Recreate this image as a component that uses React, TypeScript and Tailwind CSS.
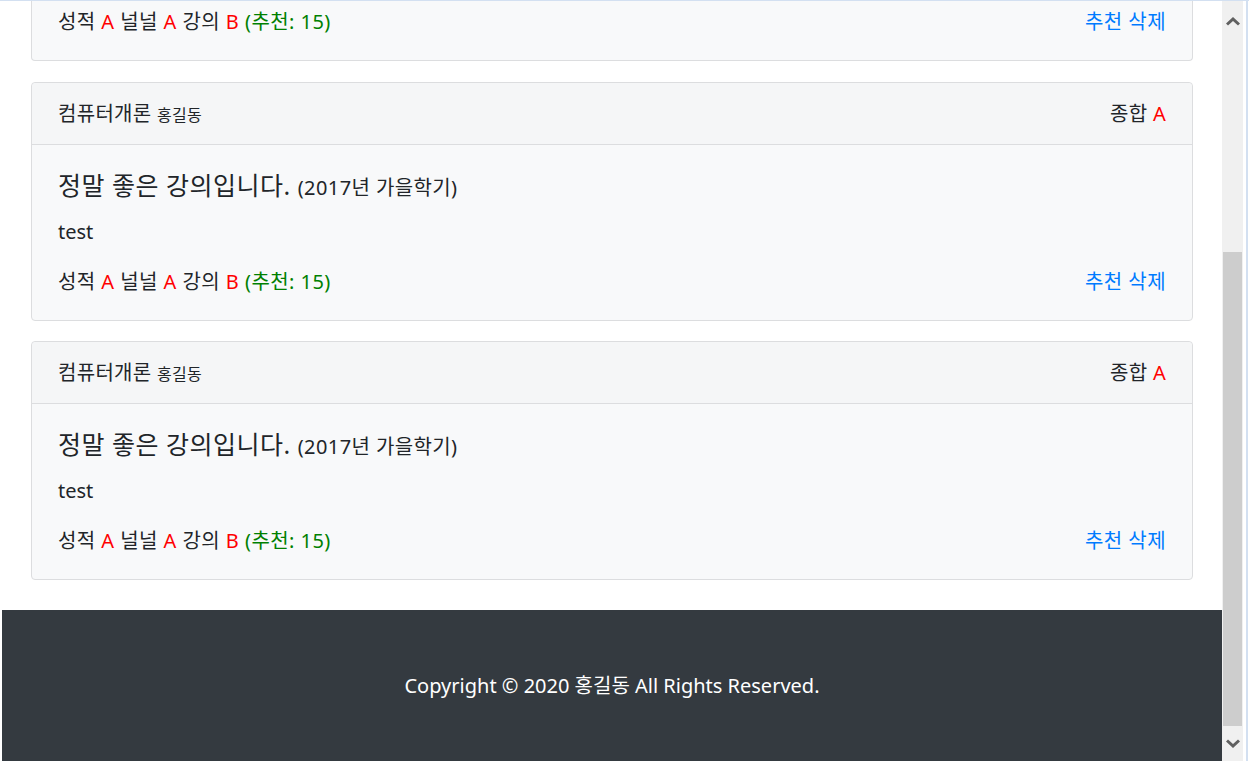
import React from "react";

function Rating() {
  return (
    <span>
      성적 <span className="text-[#ff0000]">A</span> 널널{" "}
      <span className="text-[#ff0000]">A</span> 강의{" "}
      <span className="text-[#ff0000]">B</span>{" "}
      <span className="text-[#008000]">(추천: 15)</span>
    </span>
  );
}

function FooterRow() {
  return (
    <div className="flex items-center justify-between h-[27px] leading-[27px] text-[20px] tracking-[0.45px]">
      <Rating />
      <span className="text-[#007bff]">추천 삭제</span>
    </div>
  );
}

function Card() {
  return (
    <div className="ml-[31px] mr-[29px] rounded-[4px] border border-[#dcdddf] bg-[#f8f9fa]">
      <div className="flex h-[62px] items-center justify-between border-b border-[#dcdddf] bg-[#f5f6f7] pl-[26px] pr-[26px] text-[20px] tracking-[0.3px] rounded-t-[4px]">
        <span>
          컴퓨터개론 <span className="text-[16px]">홍길동</span>
        </span>
        <span>
          종합 <span className="text-[#ff0000]">A</span>
        </span>
      </div>
      <div className="pl-[26px] pr-[26px] pt-[25px] pb-[25px]">
        <div className="h-[30px] leading-[30px] text-[25px] tracking-[0.5px]">
          정말 좋은 강의입니다.{" "}
          <span className="text-[20px] tracking-[0.4px]">(2017년 가을학기)</span>
        </div>
        <div className="mt-[18px] h-[27px] leading-[27px] text-[20px]">test</div>
        <div className="mt-[23px]">
          <FooterRow />
        </div>
      </div>
    </div>
  );
}

function Chevron({ up }: { up: boolean }) {
  return (
    <svg width="14" height="9" viewBox="0 0 14 9">
      {up ? (
        <polygon points="0,6.5 7,0 14,6.5 12,8.5 7,4 2,8.5" fill="#606060" />
      ) : (
        <polygon points="0,2.5 7,9 14,2.5 12,0.5 7,5 2,0.5" fill="#606060" />
      )}
    </svg>
  );
}

export default function App() {
  return (
    <div className="w-[1249px] h-[761px] overflow-hidden flex flex-col bg-white font-['Noto_Sans','Noto_Sans_CJK_KR',sans-serif] text-[#212529]">
      <div className="h-px bg-[#d3e0f1] shrink-0" />
      <div className="flex flex-1 min-h-0">
        <div className="w-[1222px] flex flex-col min-h-0">
          <div className="ml-[31px] mr-[29px] h-[60px] shrink-0 rounded-b-[4px] border border-t-0 border-[#dcdddf] bg-[#f8f9fa] pl-[26px] pr-[26px] pt-[7px]">
            <FooterRow />
          </div>
          <div className="h-[21px] shrink-0" />
          <Card />
          <div className="h-[20px] shrink-0" />
          <Card />
          <div className="h-[30px] shrink-0" />
          <div className="ml-[2px] flex-1 bg-[#343a40] pt-[62px] text-center text-[20px] leading-[27px] text-white">
            Copyright © 2020 홍길동 All Rights Reserved.
          </div>
        </div>
        <div className="w-[21px] bg-[#f0f0f0] flex flex-col items-center">
          <div className="h-[42px] flex items-center justify-center pb-[1px]">
            <Chevron up />
          </div>
          <div className="flex-1 flex flex-col w-full px-[1px]">
            <div className="h-[209px]" />
            <div className="h-[474px] bg-[#cdcdcd]" />
          </div>
          <div className="h-[35px] flex items-center justify-center">
            <Chevron up={false} />
          </div>
        </div>
        <div className="w-[3px] bg-white" />
        <div className="w-[2px] bg-[#d3e0f1]" />
        <div className="w-px bg-white" />
      </div>
    </div>
  );
}
